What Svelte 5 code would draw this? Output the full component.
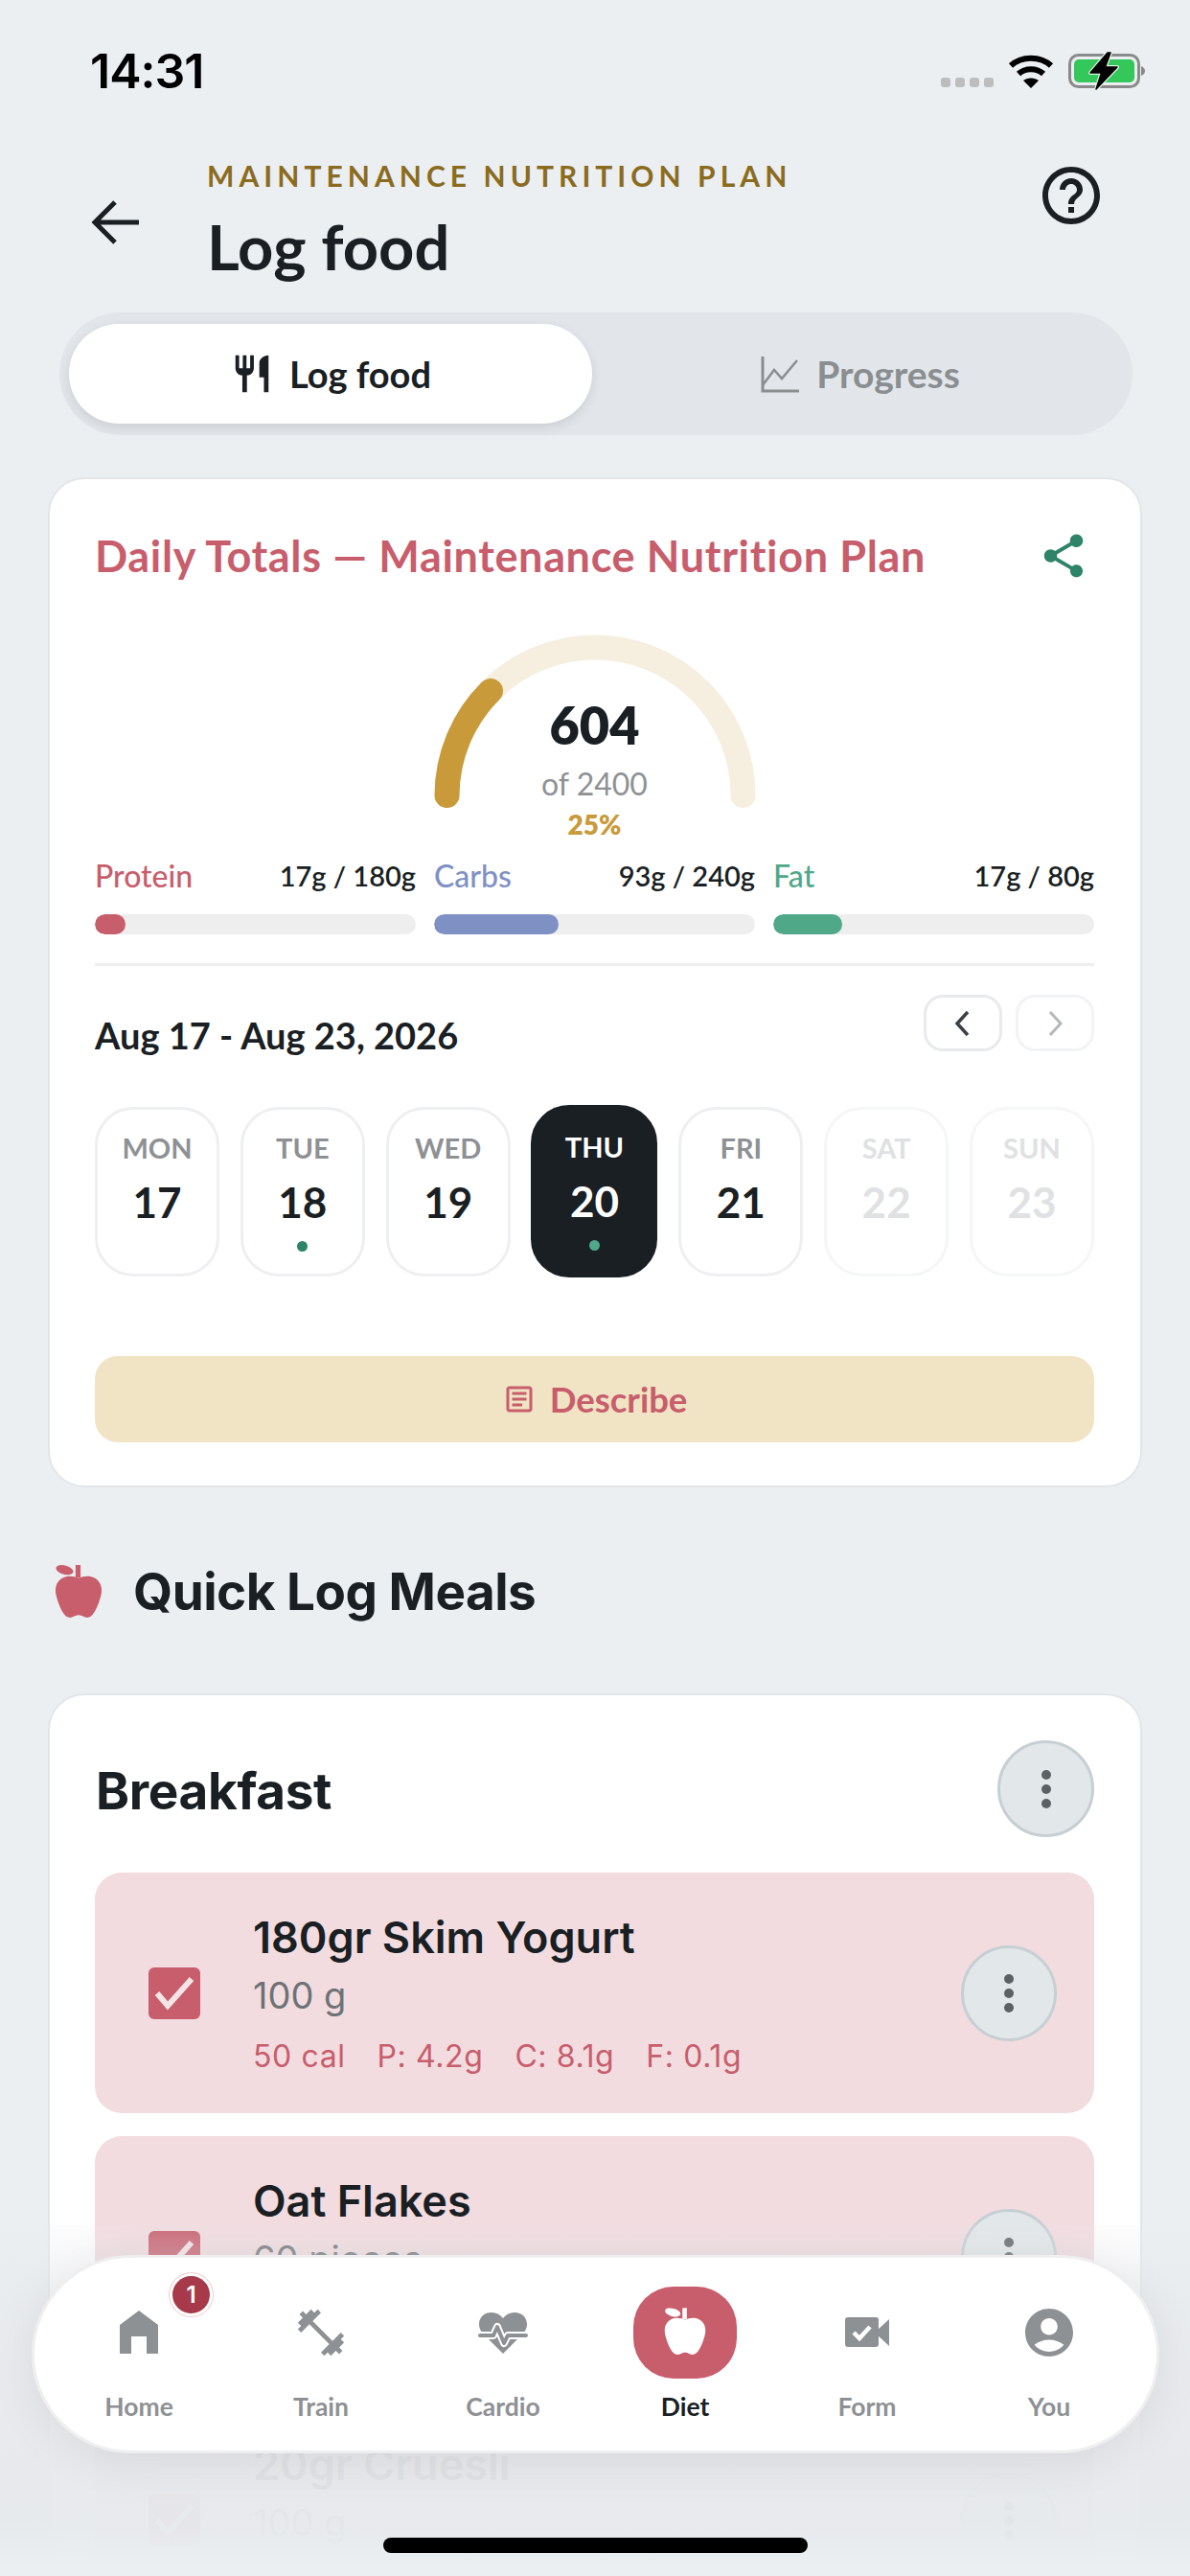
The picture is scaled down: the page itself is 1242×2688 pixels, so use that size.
<script>
  const macros = [
    { name: 'Protein', val: '17g / 180g', color: '#c85d6c', fill: 32 },
    { name: 'Carbs', val: '93g / 240g', color: '#7f90c4', fill: 130 },
    { name: 'Fat', val: '17g / 80g', color: '#4fa888', fill: 72 }
  ];
  const days = [
    { d: 'MON', n: 17 },
    { d: 'TUE', n: 18, dot: true },
    { d: 'WED', n: 19 },
    { d: 'THU', n: 20, dot: true, sel: true },
    { d: 'FRI', n: 21 },
    { d: 'SAT', n: 22, off: true },
    { d: 'SUN', n: 23, off: true }
  ];
  const items = [
    { name: '180gr Skim Yogurt', qty: '100 g', m: ['50 cal', 'P: 4.2g', 'C: 8.1g', 'F: 0.1g'] },
    { name: 'Oat Flakes', qty: '60 pieces', m: [] },
    { name: '20gr Cruesli', qty: '100 g', m: [] }
  ];
  const nav = ['Home', 'Train', 'Cardio', 'Diet', 'Form', 'You'];
  const appleBody = 'M24 13.5C29 11 35 10.5 40 13C46 16 48.500 23 46.500 31C44.500 39 39.500 53 33 53C29.500 53 27.500 50.500 24 50.500C20.500 50.500 18.500 53 15 53C8.500 53 3.500 39 1.500 31C-.5 23 2 16 8 13C13 10.500 19 11 24 13.500Z';
</script>

<div class="screen">
  <div class="status">
    <span class="time">14:31</span>
    <svg class="status-icons" width="216" height="40" viewBox="0 0 216 40">
      <g fill="#bdbdbd">
        <rect x="0" y="27" width="10" height="10" rx="3" /><rect x="15" y="27" width="10" height="10" rx="3" />
        <rect x="30" y="27" width="10" height="10" rx="3" /><rect x="45" y="27" width="10" height="10" rx="3" />
      </g>
      <g fill="none" stroke="#000" stroke-width="6">
        <path d="M73 14.500C84 4 104 4 115 14.500" />
        <path d="M81 23C88 16.500 100 16.500 107 23" />
      </g>
      <path d="M94 38L86 30C90 26.500 98 26.500 102 30Z" />
      <rect x="134.500" y="3.500" width="72" height="33" rx="9" fill="none" stroke="#8a8a8a" stroke-width="3" />
      <rect x="139" y="8" width="63" height="24" rx="5" fill="#34c759" />
      <path d="M209 15c3 1 4 3 4 5s-1 4-4 5z" fill="#8a8a8a" />
      <path d="M174 1L156 22H167.500L162 39L184 16H171.500L177 1Z" fill="#000" stroke="#dff3e4" stroke-width="4" stroke-linejoin="round" />
      <path d="M174 1L156 22H167.500L162 39L184 16H171.500L177 1Z" fill="#000" stroke="#000" stroke-width="1.500" stroke-linejoin="round" />
    </svg>
  </div>

  <header class="head">
    <svg class="back" width="52" height="48" viewBox="0 0 52 48"><path d="M50 24H5M25 3L4 24l21 21" fill="none" stroke="#1a1f24" stroke-width="5" /></svg>
    <div class="head-text">
      <div class="kicker">MAINTENANCE NUTRITION PLAN</div>
      <h1>Log food</h1>
    </div>
    <svg class="help" width="72" height="72" viewBox="0 0 24 24" fill="#1a1f24"><path d="M11 18h2v-2h-2v2zm1-16C6.480 2 2 6.480 2 12s4.480 10 10 10 10-4.480 10-10S17.520 2 12 2zm0 18c-4.410 0-8-3.590-8-8s3.590-8 8-8 8 3.590 8 8-3.590 8-8 8zm0-14c-2.210 0-4 1.790-4 4h2c0-1.100.9-2 2-2s2 .9 2 2c0 2-3 1.750-3 5h2c0-2.250 3-2.500 3-5 0-2.210-1.790-4-4-4z" /></svg>
  </header>

  <div class="tabs">
    <div class="tab active">
      <svg width="46" height="46" viewBox="0 0 24 24" fill="#1a1f24"><path d="M11 9H9V2H7v7H5V2H3v7c0 2.120 1.660 3.840 3.750 3.970V22h2.500v-9.030C11.340 12.840 13 11.120 13 9V2h-2v7zm5-3v8h2.500v8H21V2c-2.760 0-5 2.240-5 4z" /></svg>
      <span>Log food</span>
    </div>
    <div class="tab">
      <svg width="40" height="40" viewBox="0 0 40 40" fill="none" stroke="#8a8e91" stroke-width="3"><path d="M2 2V38H40" /><path d="M2 32L14 16L22 25L38 6" stroke-width="2.500" /></svg>
      <span>Progress</span>
    </div>
  </div>

  <section class="card totals">
    <div class="title-row">
      <h2>Daily Totals — Maintenance Nutrition Plan</h2>
      <svg width="54" height="54" viewBox="0 0 24 24" fill="#2e8468"><path d="M18 16.080c-.76 0-1.440.3-1.960.77L8.910 12.700c.05-.23.09-.46.09-.7s-.04-.47-.09-.7l7.050-4.110c.54.5 1.250.81 2.040.81 1.660 0 3-1.340 3-3s-1.340-3-3-3-3 1.340-3 3c0 .24.04.47.09.7L8.040 9.810C7.500 9.310 6.790 9 6 9c-1.660 0-3 1.340-3 3s1.340 3 3 3c.79 0 1.500-.31 2.040-.81l7.120 4.160c-.05.21-.08.43-.08.65 0 1.610 1.310 2.920 2.920 2.920s2.920-1.310 2.920-2.920-1.310-2.920-2.920-2.920z" /></svg>
    </div>

    <div class="gauge">
      <svg class="arc" width="360" height="210" viewBox="0 0 360 210" fill="none" stroke-width="26" stroke-linecap="round">
        <path d="M25.500 180A154.500 154.500 0 0 1 334.500 180" stroke="#f6efdf" />
        <path d="M25.500 180A154.500 154.500 0 0 1 71 71" stroke="#c89a3a" />
      </svg>
      <div class="g-num">604</div>
      <div class="g-of">of 2400</div>
      <div class="g-pct">25%</div>
    </div>

    <div class="macros">
      {#each macros as m}
        <div>
          <div class="m-row"><span style="color:{m.color}">{m.name}</span><span class="m-val">{m.val}</span></div>
          <div class="bar"><div class="fill" style="width:{m.fill}px;background:{m.color}"></div></div>
        </div>
      {/each}
    </div>

    <div class="divider"></div>

    <div class="date-row">
      <div class="date">Aug 17 - Aug 23, 2026</div>
      <div class="arrows">
        <div class="arrow"><svg width="24" height="30" viewBox="0 0 24 30" fill="none" stroke="#3c4147" stroke-width="3.500"><path d="M17 3L6 15l11 12" /></svg></div>
        <div class="arrow dim"><svg width="24" height="30" viewBox="0 0 24 30" fill="none" stroke="#b5b8ba" stroke-width="3"><path d="M7 3l11 12L7 27" /></svg></div>
      </div>
    </div>

    <div class="days">
      {#each days as day}
        <div class="day" class:sel={day.sel} class:off={day.off}>
          <span class="d-name">{day.d}</span>
          <span class="d-num">{day.n}</span>
          {#if day.dot}<i class="dot"></i>{/if}
        </div>
      {/each}
    </div>

    <div class="describe">
      <svg width="36" height="36" viewBox="0 0 24 24" fill="#c85d6c"><path d="M19 5v14H5V5h14m0-2H5c-1.100 0-2 .9-2 2v14c0 1.100.9 2 2 2h14c1.100 0 2-.9 2-2V5c0-1.100-.9-2-2-2zM14 17H7v-2h7v2zm3-4H7v-2h10v2zm0-4H7V7h10v2z" /></svg>
      <span>Describe</span>
    </div>
  </section>

  <div class="section-title">
    <svg width="50" height="58" viewBox="0 0 48 56" fill="#c85d6c">
      <rect x="21" y="0" width="5" height="13" />
      <ellipse cx="10" cy="5" rx="9" ry="4.500" transform="rotate(15 10 5)" />
      <path d={appleBody} />
    </svg>
    <h2>Quick Log Meals</h2>
  </div>

  <section class="card meals">
    <div class="meal-head">
      <h3>Breakfast</h3>
      <div class="more"><i></i><i></i><i></i></div>
    </div>
    <div class="items">
      {#each items as it}
        <div class="item">
          <div class="check"><svg width="48" height="40" viewBox="0 0 48 40" fill="none" stroke="#f4e4e6" stroke-width="6"><path d="M6 20l11 13L42 5" /></svg></div>
          <div class="item-text">
            <div class="i-name">{it.name}</div>
            <div class="i-qty">{it.qty}</div>
            {#if it.m.length}
              <div class="i-macros">{#each it.m as v}<span>{v}</span>{/each}</div>
            {/if}
          </div>
          <div class="more small"><i></i><i></i><i></i></div>
        </div>
      {/each}
    </div>
  </section>

  <div class="fade"></div>

  <nav class="nav">
    {#each nav as n, i}
      <div class="nav-item" class:cur={n === 'Diet'}>
        <div class="nav-icon">
          {#if i === 0}
            <svg width="42" height="46" viewBox="0 0 42 46" fill="#8e9194"><path d="M21 0L41 15V45H29V27H13V45H1V15Z" /></svg>
            <span class="badge">1</span>
          {:else if i === 1}
            <svg width="58" height="58" viewBox="0 0 24 24" fill="#8e9194"><path d="M20.570 14.860L22 13.430 20.570 12 17 15.570 8.430 7 12 3.430 10.570 2 9.140 3.430 7.710 2 5.570 4.140 4.140 2.710 2.710 4.140l1.430 1.430L2 7.710l1.430 1.430L2 10.570 3.430 12 7 8.430 15.570 17 12 20.570 13.430 22l1.430-1.430L16.290 22l2.140-2.140 1.430 1.430 1.430-1.430-1.430-1.430L22 16.290z" /></svg>
          {:else if i === 2}
            <svg width="52" height="44" viewBox="0 0 52 44" fill="none">
              <path d="M26 44L4 22C-3 12 3 1 14 1C19 1 23 3 26 7C29 3 33 1 38 1C49 1 55 12 48 22Z" fill="#8e9194" />
              <path d="M0 25H16L20 16L27 33L31 25H52" stroke="#fff" stroke-width="8" stroke-linejoin="round" />
              <path d="M2 25H16L20 16L27 33L31 25H50" stroke="#8e9194" stroke-width="4" stroke-linecap="round" stroke-linejoin="round" />
            </svg>
          {:else if i === 3}
            <svg width="44" height="52" viewBox="0 0 48 56" fill="#fff">
              <rect x="21" y="0" width="5" height="13" />
              <ellipse cx="10" cy="5" rx="9" ry="4.500" transform="rotate(15 10 5)" />
              <path d={appleBody} />
            </svg>
          {:else if i === 4}
            <svg width="46" height="32" viewBox="0 0 46 32">
              <rect x="0" y="0" width="35" height="31" rx="3" fill="#8e9194" />
              <path d="M33 14L46 2V30L33 18Z" fill="#8e9194" />
              <path d="M9 16l6 6L26 10" fill="none" stroke="#fff" stroke-width="4.500" />
            </svg>
          {:else}
            <svg width="60" height="60" viewBox="0 0 24 24" fill="#8e9194"><path d="M12 2C6.480 2 2 6.480 2 12s4.480 10 10 10 10-4.480 10-10S17.520 2 12 2zm0 4c1.930 0 3.500 1.570 3.500 3.500S13.930 13 12 13s-3.500-1.570-3.500-3.500S10.070 6 12 6zm0 14c-2.030 0-4.430-.82-6.140-2.880C7.550 15.800 9.680 15 12 15s4.450.8 6.140 2.120C16.430 19.180 14.030 20 12 20z" /></svg>
          {/if}
        </div>
        <span class="nav-label">{n}</span>
      </div>
    {/each}
  </nav>

  <div class="home-ind"></div>
</div>

<style>
  :global(body) { margin: 0; background: #ebeff2; }
  .screen { position: relative; width: 1242px; height: 2688px; overflow: hidden; background: #ebeff2; color: #1a1f24; font-family: Lato, "Noto Sans", sans-serif; }
  h1, h2, h3 { margin: 0; }
  .status { height: 160px; box-sizing: border-box; padding: 46px 44px 0 94px; display: flex; justify-content: space-between; align-items: flex-start; }
  .time { font: 600 50px/56px Inter, sans-serif; letter-spacing: -1px; color: #000; }
  .status-icons { margin-top: 8px; margin-right: 0; }
  .head { height: 140px; padding: 0 90px 0 95px; display: flex; align-items: flex-start; position: relative; }
  .back { margin-top: 48px; margin-right: 69px; flex: none; }
  .head-text { flex: 1; }
  .kicker { font-size: 30px; line-height: 46px; font-weight: 700; letter-spacing: 5.050px; color: #8b6b1e; }
  h1 { font-size: 65px; line-height: 84px; font-weight: 700; margin-top: 9px; }
  .help { margin-top: 8px; margin-right: -2px; }
  .tabs { margin: 26px 60px 0 62px; height: 128px; box-sizing: border-box; padding: 12px 10px; background: #e2e6ea; border-radius: 64px; display: flex; }
  .tab { flex: 1; display: flex; align-items: center; justify-content: center; gap: 16px; font-size: 38px; font-weight: 700; color: #8a8e91; border-radius: 52px; }
  .tab:last-child { gap: 18px; padding-left: 6px; font-size: 39px; }
  .tab.active { flex: 0 0 546px; background: #fff; color: #1a1f24; box-shadow: 0 4px 12px rgba(0,0,0,.1); }
  .card { margin: 44px 50px 0; background: #fff; border: 2px solid #e2e6e9; border-radius: 38px; box-sizing: border-box; padding: 0 48px 0 47px; }
  .totals { height: 1054px; padding-top: 50px; }
  .title-row { display: flex; justify-content: space-between; align-items: center; height: 60px; padding-right: 5px; }
  .title-row h2 { font-size: 45px; line-height: 60px; font-weight: 700; letter-spacing: .65px; color: #c85d6c; white-space: nowrap; }
  .gauge { position: relative; height: 244px; margin-top: 40px; padding-top: 75px; box-sizing: border-box; text-align: center; }
  .arc { position: absolute; left: 50%; top: 0; margin-left: -180px; }
  .g-num { position: relative; font-size: 54px; line-height: 64px; font-weight: 800; }
  .g-of { position: relative; font-size: 32px; line-height: 40px; margin-top: 9px; color: #8e9194; }
  .g-pct { position: relative; font-size: 28px; line-height: 34px; margin-top: 5px; font-weight: 800; color: #c89a3a; }
  .macros { display: grid; grid-template-columns: repeat(3, 1fr); gap: 19px; }
  .m-row { display: flex; justify-content: space-between; font-size: 32px; line-height: 40px; font-weight: 500; }
  .m-val { font-size: 29px; font-weight: 600; color: #1a1f24; }
  .bar { margin-top: 20px; height: 21px; border-radius: 11px; background: #eeeeee; overflow: hidden; }
  .fill { height: 100%; border-radius: 11px; }
  .divider { margin-top: 30px; height: 3px; background: #eeeeee; }
  .date-row { display: flex; justify-content: space-between; margin-top: 30px; height: 64px; }
  .date { margin-top: 20px; font-size: 38px; line-height: 44px; font-weight: 700; }
  .arrows { display: flex; gap: 14px; }
  .arrow { width: 82px; height: 59px; box-sizing: border-box; border: 3px solid #e8eaeb; border-radius: 20px; display: flex; align-items: center; justify-content: center; }
  .arrow.dim { border-color: #f2f3f4; }
  .days { margin-top: 51px; display: flex; justify-content: space-between; align-items: center; height: 180px; }
  .day { position: relative; width: 130px; height: 177px; box-sizing: border-box; border: 3px solid #eeeff0; border-radius: 40px; text-align: center; padding-top: 21px; display: flex; flex-direction: column; align-items: center; }
  .d-name { font-size: 29px; line-height: 38px; font-weight: 700; color: #8e9194; }
  .d-num { font-size: 44px; line-height: 56px; margin-top: 9px; font-weight: 700; }
  .dot { width: 11px; height: 11px; border-radius: 50%; background: #2e8468; margin-top: 13px; }
  .day.sel { width: 132px; height: 180px; background: #1a1f24; border-color: #1a1f24; color: #fff; padding-top: 22px; }
  .day.sel .d-name { color: #fff; }
  .day.sel .dot { background: #4fa888; }
  .day.off { border-color: #f5f6f6; }
  .day.off .d-name, .day.off .d-num { color: #dfe1e3; }
  .describe { margin-top: 82px; height: 90px; border-radius: 24px; background: #f0e4c5; display: flex; align-items: center; justify-content: center; gap: 14px; color: #c85d6c; font-size: 36.500px; line-height: 88px; font-weight: 700; }
  .section-title { margin: 73px 0 0 57px; height: 70px; display: flex; align-items: center; gap: 32px; }
  .section-title svg { margin-top: 3px; }
  .section-title h2 { font: 700 53px/70px Inter, sans-serif; letter-spacing: -.5px; margin-top: 2px; }
  .meals { margin-top: 72px; padding-top: 47px; padding-bottom: 60px; }
  .meal-head { display: flex; justify-content: space-between; align-items: center; height: 101px; }
  h3 { font: 700 53px/60px Inter, sans-serif; letter-spacing: -.3px; margin-top: 4px; margin-left: 1px; }
  .more { width: 101px; height: 101px; box-sizing: border-box; border-radius: 50%; background: #e2e7ea; border: 3px solid #c6cfd2; display: flex; flex-direction: column; align-items: center; justify-content: center; gap: 5px; flex: none; }
  .more i { width: 10px; height: 10px; border-radius: 50%; background: #5c6165; }
  .items { margin-top: 37px; display: flex; flex-direction: column; gap: 24px; }
  .item { height: 251px; box-sizing: border-box; background: #f2dce0; border-radius: 28px; display: flex; align-items: center; padding: 0 39px 0 56px; }
  .check { width: 54px; height: 54px; border-radius: 6px; background: #c85d6c; display: flex; align-items: center; justify-content: center; flex: none; }
  .item-text { flex: 1; align-self: flex-start; padding: 40px 0 0 55px; font-family: Inter, sans-serif; }
  .i-name { font-size: 45px; line-height: 56px; font-weight: 600; letter-spacing: 0; }
  .i-qty { font-size: 38px; line-height: 48px; margin-top: 8px; color: #6e7276; }
  .i-macros { margin-top: 20px; display: flex; gap: 33px; font-size: 32px; line-height: 40px; letter-spacing: .6px; color: #c85d6c; }
  .more.small { width: 100px; height: 100px; }
  .fade { position: absolute; left: 0; right: 0; top: 2322px; bottom: 0; background: linear-gradient(to bottom, rgba(232,234,237,.12) 0%, rgba(232,234,237,.6) 20%, rgba(231,233,236,.96) 66%, rgba(231,234,237,.97) 85%, rgba(235,239,242,1) 98%); }
  .nav { position: absolute; left: 33px; top: 2353px; width: 1177px; height: 207px; box-sizing: border-box; padding: 30px 14px 0; background: #fff; border: 3px solid #efefef; border-radius: 104px; display: flex; box-shadow: 0 8px 50px rgba(0,0,0,.07); }
  .nav-item { width: 190px; display: flex; flex-direction: column; align-items: center; flex: none; }
  .nav-icon { position: relative; width: 108px; height: 96px; display: flex; align-items: center; justify-content: center; border-radius: 42px; }
  .nav-item.cur .nav-icon { background: #c85d6c; }
  .nav-label { margin-top: 11px; font-size: 26.500px; line-height: 36px; font-weight: 700; color: #8e9194; }
  .nav-item.cur .nav-label { color: #1a1f24; }
  .badge { position: absolute; left: 89px; top: -11px; width: 39px; height: 39px; border-radius: 50%; background: #a63a4a; color: #fff; font: 600 24px/39px Inter, sans-serif; text-align: center; box-shadow: 0 0 0 3px #fff, 0 0 0 4px #f0cdd2; }
  .home-ind { position: absolute; left: 400px; top: 2648px; width: 443px; height: 16px; border-radius: 8px; background: #000; }
</style>
